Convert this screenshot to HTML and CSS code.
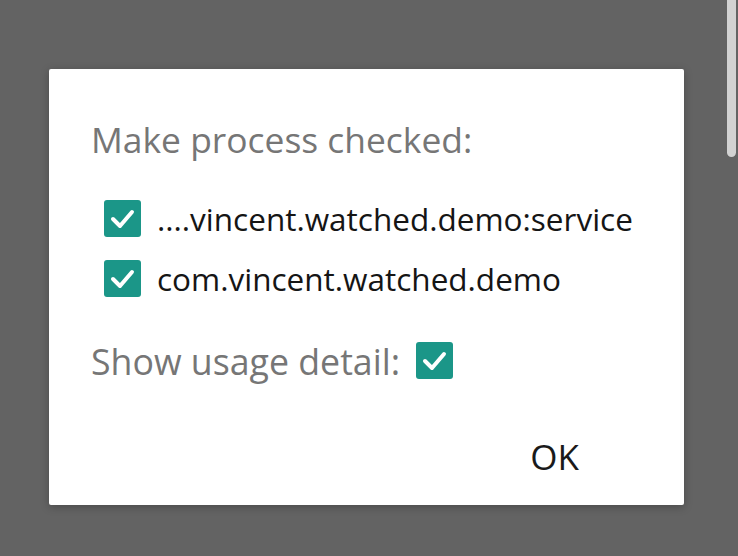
FILE: index.html
```html
<!DOCTYPE html>
<html>
<head>
<meta charset="utf-8">
<link rel="stylesheet" href="styles.css">
</head>
<body>
<div class="scrollbar"></div>
<div class="dialog">
  <div class="title">Make process checked:</div>
  <div class="list">
    <div class="row">
      <span class="check"><svg viewBox="0 0 37 37" width="37" height="37"><path d="M9 19 L16 26 L28 12" fill="none" stroke="#fff" stroke-width="4" stroke-linecap="round" stroke-linejoin="round"/></svg></span>
      <span class="item">....vincent.watched.demo:service</span>
    </div>
    <div class="row">
      <span class="check"><svg viewBox="0 0 37 37" width="37" height="37"><path d="M9 19 L16 26 L28 12" fill="none" stroke="#fff" stroke-width="4" stroke-linecap="round" stroke-linejoin="round"/></svg></span>
      <span class="item">com.vincent.watched.demo</span>
    </div>
  </div>
  <div class="usage">
    <span class="label">Show usage detail:</span>
    <span class="check"><svg viewBox="0 0 37 37" width="37" height="37"><path d="M9 19 L16 26 L28 12" fill="none" stroke="#fff" stroke-width="4" stroke-linecap="round" stroke-linejoin="round"/></svg></span>
  </div>
  <div class="actions"><span class="ok">OK</span></div>
</div>
</body>
</html>
```

FILE: styles.css
```css
html, body {
  margin: 0;
  padding: 0;
}
body {
  background: #636363;
  width: 738px;
  height: 556px;
  overflow: hidden;
  position: relative;
  font-family: "Open Sans", "Noto Sans", sans-serif;
  padding-top: 69px;
  padding-left: 49px;
  box-sizing: border-box;
}
.scrollbar {
  position: absolute;
  top: 0;
  left: 727px;
  width: 9px;
  height: 157px;
  background: #d2d2d2;
  border-radius: 0 0 5px 5px;
}
.dialog {
  width: 635px;
  height: 436px;
  background: #fff;
  border-radius: 2px;
  box-shadow: 0 2px 8px rgba(0,0,0,0.25);
  box-sizing: border-box;
  padding: 0 42px;
  display: flex;
  flex-direction: column;
}
.title {
  margin-top: 50px;
  font-size: 35.4px;
  line-height: 40px;
  color: #767676;
  white-space: nowrap;
}
.list {
  margin-top: 40px;
  padding-left: 13px;
  display: flex;
  flex-direction: column;
  gap: 21px;
}
.row {
  display: flex;
  align-items: center;
  gap: 16px;
  height: 39px;
}
.check {
  width: 37px;
  height: 37px;
  background: #1b9688;
  border-radius: 3px;
  display: inline-flex;
  flex: none;
}
.check svg { display: block; }
.item {
  font-size: 31.5px;
  color: #151515;
  white-space: nowrap;
}
.usage {
  margin-top: 43px;
  height: 39px;
  display: flex;
  align-items: center;
  gap: 16px;
}
.label {
  font-size: 35.7px;
  color: #767676;
  white-space: nowrap;
}
.actions {
  margin-top: 57px;
  display: flex;
  justify-content: flex-end;
  padding-right: 63px;
}
.ok {
  font-size: 35px;
  line-height: 40px;
  color: #1a1a1a;
}
```
